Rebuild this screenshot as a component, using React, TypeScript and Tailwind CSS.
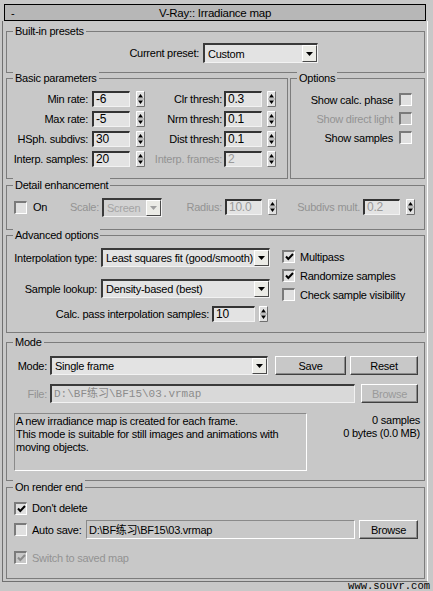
import React from "react";

type Kids = { children?: React.ReactNode };

function Group({ title, className, children }: Kids & { title: string; className: string }) {
  return (
    <div className={`relative shrink-0 border border-[#7c7c7c] ${className}`}>
      <span className="absolute -top-[8px] left-[6px] bg-[#c8c8c8] px-[2px] leading-[14px] whitespace-nowrap">
        {title}
      </span>
      {children}
    </div>
  );
}

function Spinner() {
  return (
    <svg width="9" height="16" viewBox="0 0 9 16" className="block shrink-0">
      <rect width="9" height="16" fill="#e0e0e0" />
      <path d="M0.5 15.5V0.5H8.5" fill="none" stroke="#ffffff" />
      <path d="M0.5 15.5H8.5V0.5" fill="none" stroke="#6f6f6f" />
      <path d="M1 8H8" stroke="#9c9c9c" />
      <path d="M2 6.5L4.5 3L7 6.5Z" fill="#000" />
      <path d="M2 9.5H7L4.5 13Z" fill="#000" />
    </svg>
  );
}

function Field({ className, value, disabled }: { className: string; value: string; disabled?: boolean }) {
  return (
    <div
      className={`flex h-[16px] shrink-0 items-center overflow-hidden whitespace-nowrap border-t-2 border-l-2 border-t-[#333] border-l-[#333] border-b border-r border-b-[#f2f2f2] border-r-[#f2f2f2] bg-[#e3e3e3] pl-[2px] text-[12px] leading-[13px] ${
        disabled ? "text-[#9a9a9a]" : "text-black"
      } ${className}`}
    >
      {value}
    </div>
  );
}

function Arrow({ disabled }: { disabled?: boolean }) {
  return (
    <div className="flex h-full w-[15px] shrink-0 items-center justify-center border-t border-l border-t-white border-l-white border-b border-r border-b-[#4a4a4a] border-r-[#4a4a4a] bg-[#ebebe6]">
      <svg width="7" height="4" viewBox="0 0 7 4" className="block">
        <path d="M0 0H7L3.5 4Z" fill={disabled ? "#a0a0a0" : "#000"} />
      </svg>
    </div>
  );
}

function Dropdown({ className, value, disabled }: { className: string; value: string; disabled?: boolean }) {
  return (
    <div
      className={`flex h-[19px] shrink-0 items-stretch border-t-2 border-l-2 border-t-[#3a3a3a] border-l-[#3a3a3a] border-b border-r border-b-[#f2f2f2] border-r-[#f2f2f2] ${
        disabled ? "bg-[#d2d2d2] text-[#a4a4a4]" : "bg-[#e3e3e3] text-black"
      } ${className}`}
    >
      <div className="flex min-w-0 flex-1 items-center overflow-hidden whitespace-nowrap pl-[3px]">{value}</div>
      <Arrow disabled={disabled} />
    </div>
  );
}

function Box({ checked, disabled }: { checked?: boolean; disabled?: boolean }) {
  return (
    <div
      className={`flex h-[13px] w-[13px] shrink-0 items-center justify-center border-t-2 border-l-2 border-t-[#7a7a7a] border-l-[#7a7a7a] border-b border-r border-b-white border-r-white ${
        disabled ? "bg-[#c8c8c8]" : "bg-[#e0e0e0]"
      }`}
    >
      {checked && (
        <svg width="9" height="8" viewBox="0 0 9 8" className="block">
          <path d="M1 3.5L3.3 6L8 1" fill="none" stroke={disabled ? "#8c8c8c" : "#000"} strokeWidth="2" />
        </svg>
      )}
    </div>
  );
}

function Button({ className, label, disabled }: { className: string; label: string; disabled?: boolean }) {
  return (
    <div
      className={`flex h-[19px] shrink-0 items-center justify-center border-t border-l border-t-white border-l-white border-b border-r border-b-[#404040] border-r-[#404040] bg-[#c8c8c8] shadow-[inset_-1px_-1px_0_#8a8a8a] ${
        disabled ? "text-[#9a9a9a]" : "text-black"
      } ${className}`}
    >
      {label}
    </div>
  );
}

function SpinPair({
  a,
  av,
  b,
  bv,
  bDisabled,
}: {
  a: string;
  av: string;
  b: string;
  bv: string;
  bDisabled?: boolean;
}) {
  return (
    <div className="flex h-[20px] items-center">
      <div className="w-[81px] text-right whitespace-nowrap">{a}</div>
      <Field className="ml-[4px] w-[38px]" value={av} />
      <div className="ml-[6px]">
        <Spinner />
      </div>
      <div className={`w-[77px] text-right whitespace-nowrap ${bDisabled ? "text-[#939393]" : ""}`}>{b}</div>
      <Field className="ml-[2px] w-[38px]" value={bv} disabled={bDisabled} />
      <div className="ml-[5px]">
        <Spinner />
      </div>
    </div>
  );
}

function OptRow({ label, disabled }: { label: string; disabled?: boolean }) {
  return (
    <div className="flex h-[19px] items-center justify-end pr-[12px]">
      <span className={disabled ? "text-[#939393]" : ""}>{label}</span>
      <div className="ml-[6px]">
        <Box disabled={disabled} />
      </div>
    </div>
  );
}

function CheckLine({ label, checked, disabled }: { label: string; checked?: boolean; disabled?: boolean }) {
  return (
    <div className="flex h-[19px] items-center">
      <Box checked={checked} disabled={disabled} />
      <span className={`ml-[5px] whitespace-nowrap ${disabled ? "text-[#939393]" : ""}`}>{label}</span>
    </div>
  );
}

export default function App() {
  return (
    <div className="h-[591px] w-[433px] overflow-hidden bg-[#c8c8c8] pt-[4px] text-[11px] leading-[14px] tracking-[-0.25px] text-black font-['Liberation_Sans',Arial,sans-serif]">
      {/* rollout header */}
      <div className="ml-[4px] grid h-[17px] w-[422px] grid-cols-[40px_1fr_40px] items-center border border-black bg-[#b7b7b7]">
        <span className="pl-[6px]">-</span>
        <span className="text-center text-[11.5px]">V-Ray:: Irradiance map</span>
        <span />
      </div>

      {/* rollout body */}
      <div className="ml-[2px] flex w-[426px] flex-col border-l border-r border-b border-l-[#707070] border-r-white border-b-[#707070] pt-[10px] pb-[2px]">
        <Group title="Built-in presets" className="ml-[3px] h-[42px] w-[419px]">
          <div className="mt-[11px] flex h-[20px] items-center">
            <div className="w-[192px] text-right">Current preset:</div>
            <Dropdown className="ml-[4px] w-[115px] h-[20px]" value="Custom" />
          </div>
        </Group>

        <div className="ml-[3px] mt-[5px] flex gap-[2px]">
          <Group title="Basic parameters" className="h-[101px] w-[282px]">
            <div className="flex flex-col pt-[10px]">
              <SpinPair a="Min rate:" av="-6" b="Clr thresh:" bv="0.3" />
              <SpinPair a="Max rate:" av="-5" b="Nrm thresh:" bv="0.1" />
              <SpinPair a="HSph. subdivs:" av="30" b="Dist thresh:" bv="0.1" />
              <SpinPair a="Interp. samples:" av="20" b="Interp. frames:" bv="2" bDisabled />
            </div>
          </Group>
          <Group title="Options" className="h-[101px] w-[135px]">
            <div className="flex flex-col pt-[11px]">
              <OptRow label="Show calc. phase" />
              <OptRow label="Show direct light" disabled />
              <OptRow label="Show samples" />
            </div>
          </Group>
        </div>

        <Group title="Detail enhancement" className="ml-[3px] mt-[6px] h-[45px] w-[419px]">
          <div className="mt-[11px] flex h-[20px] items-center">
            <div className="ml-[7px]">
              <Box />
            </div>
            <span className="ml-[6px] w-[20px]">On</span>
            <div className="w-[46px] text-right text-[#939393]">Scale:</div>
            <Dropdown className="ml-[3px] w-[60px]" value="Screen" disabled />
            <div className="w-[60px] text-right text-[#939393]">Radius:</div>
            <Field className="ml-[3px] w-[37px]" value="10.0" disabled />
            <div className="ml-[6px]">
              <Spinner />
            </div>
            <div className="w-[83px] text-right text-[#939393]">Subdivs mult.</div>
            <Field className="ml-[3px] w-[37px]" value="0.2" disabled />
            <div className="ml-[6px]">
              <Spinner />
            </div>
          </div>
        </Group>

        <Group title="Advanced options" className="ml-[3px] mt-[5px] h-[98px] w-[419px]">
          <div className="flex">
            <div className="flex w-[263px] flex-col pt-[12px]">
              <div className="flex h-[19px] items-center">
                <div className="w-[90px] text-right whitespace-nowrap">Interpolation type:</div>
                <Dropdown className="ml-[4px] w-[169px]" value="Least squares fit (good/smooth)" />
              </div>
              <div className="mt-[12px] flex h-[19px] items-center">
                <div className="w-[90px] text-right whitespace-nowrap">Sample lookup:</div>
                <Dropdown className="ml-[4px] w-[169px]" value="Density-based (best)" />
              </div>
              <div className="mt-[8px] flex h-[16px] items-center">
                <div className="w-[202px] text-right whitespace-nowrap">Calc. pass interpolation samples:</div>
                <Field className="ml-[3px] w-[43px]" value="10" />
                <div className="ml-[4px]">
                  <Spinner />
                </div>
              </div>
            </div>
            <div className="ml-[12px] flex flex-col pt-[11px]">
              <CheckLine label="Multipass" checked />
              <CheckLine label="Randomize samples" checked />
              <CheckLine label="Check sample visibility" />
            </div>
          </div>
        </Group>

        <Group title="Mode" className="ml-[3px] mt-[9px] h-[139px] w-[419px]">
          <div className="mt-[13px] flex h-[19px] items-center">
            <div className="w-[40px] text-right">Mode:</div>
            <Dropdown className="ml-[3px] w-[218px]" value="Single frame" />
            <Button className="ml-[7px] w-[71px]" label="Save" />
            <Button className="ml-[4px] w-[68px]" label="Reset" />
          </div>
          <div className="mt-[9px] flex h-[19px] items-center">
            <div className="w-[40px] text-right text-[#939393]">File:</div>
            <div className="ml-[3px] flex h-[19px] w-[305px] items-center overflow-hidden whitespace-nowrap border-t-2 border-l-2 border-t-[#3a3a3a] border-l-[#3a3a3a] border-b border-r border-b-[#f2f2f2] border-r-[#f2f2f2] bg-[#d9d9d9] pl-[2px] text-[11px] tracking-normal text-[#8c8c8c] font-['Liberation_Mono','Noto_Sans_CJK_SC',monospace]">
              D:\BF练习\BF15\03.vrmap
            </div>
            <Button className="ml-[6px] w-[57px]" label="Browse" disabled />
          </div>
          <div className="mt-[10px] flex">
            <div className="ml-[7px] h-[58px] w-[293px] border-t border-l border-t-[#8a8a8a] border-l-[#8a8a8a] border-b border-r border-b-white border-r-white pl-[1px] pt-[1px] leading-[13px]">
              <div>A new irradiance map is created for each frame.</div>
              <div>This mode is suitable for still images and animations with</div>
              <div>moving objects.</div>
            </div>
            <div className="flex-1 pt-[1px] pr-[4px] text-right leading-[13px]">
              <div>0 samples</div>
              <div>0 bytes (0.0 MB)</div>
            </div>
          </div>
        </Group>

        <Group title="On render end" className="ml-[3px] mt-[6px] h-[92px] w-[419px]">
          <div className="ml-[7px] flex flex-col pt-[10px]">
            <div className="flex h-[20px] items-center">
              <Box checked />
              <span className="ml-[5px]">Don't delete</span>
            </div>
            <div className="mt-[2px] flex h-[19px] items-center">
              <Box />
              <span className="ml-[5px] w-[50px] whitespace-nowrap">Auto save:</span>
              <div className="ml-[4px] flex h-[19px] w-[269px] items-center overflow-hidden whitespace-nowrap border-t border-l border-t-[#8a8a8a] border-l-[#8a8a8a] border-b border-r border-b-white border-r-white bg-[#c8c8c8] pl-[2px] font-['Liberation_Sans','Noto_Sans_CJK_SC',sans-serif]">
                D:\BF练习\BF15\03.vrmap
              </div>
              <Button className="ml-[4px] w-[59px]" label="Browse" />
            </div>
            <div className="mt-[9px] flex h-[19px] items-center">
              <Box checked disabled />
              <span className="ml-[5px] text-[#939393]">Switch to saved map</span>
            </div>
          </div>
        </Group>
      </div>

      <div className="flex justify-end pr-[3px] text-[10.5px] leading-[9px] tracking-normal font-['Liberation_Mono',monospace]">
        www.souvr.com
      </div>
    </div>
  );
}
